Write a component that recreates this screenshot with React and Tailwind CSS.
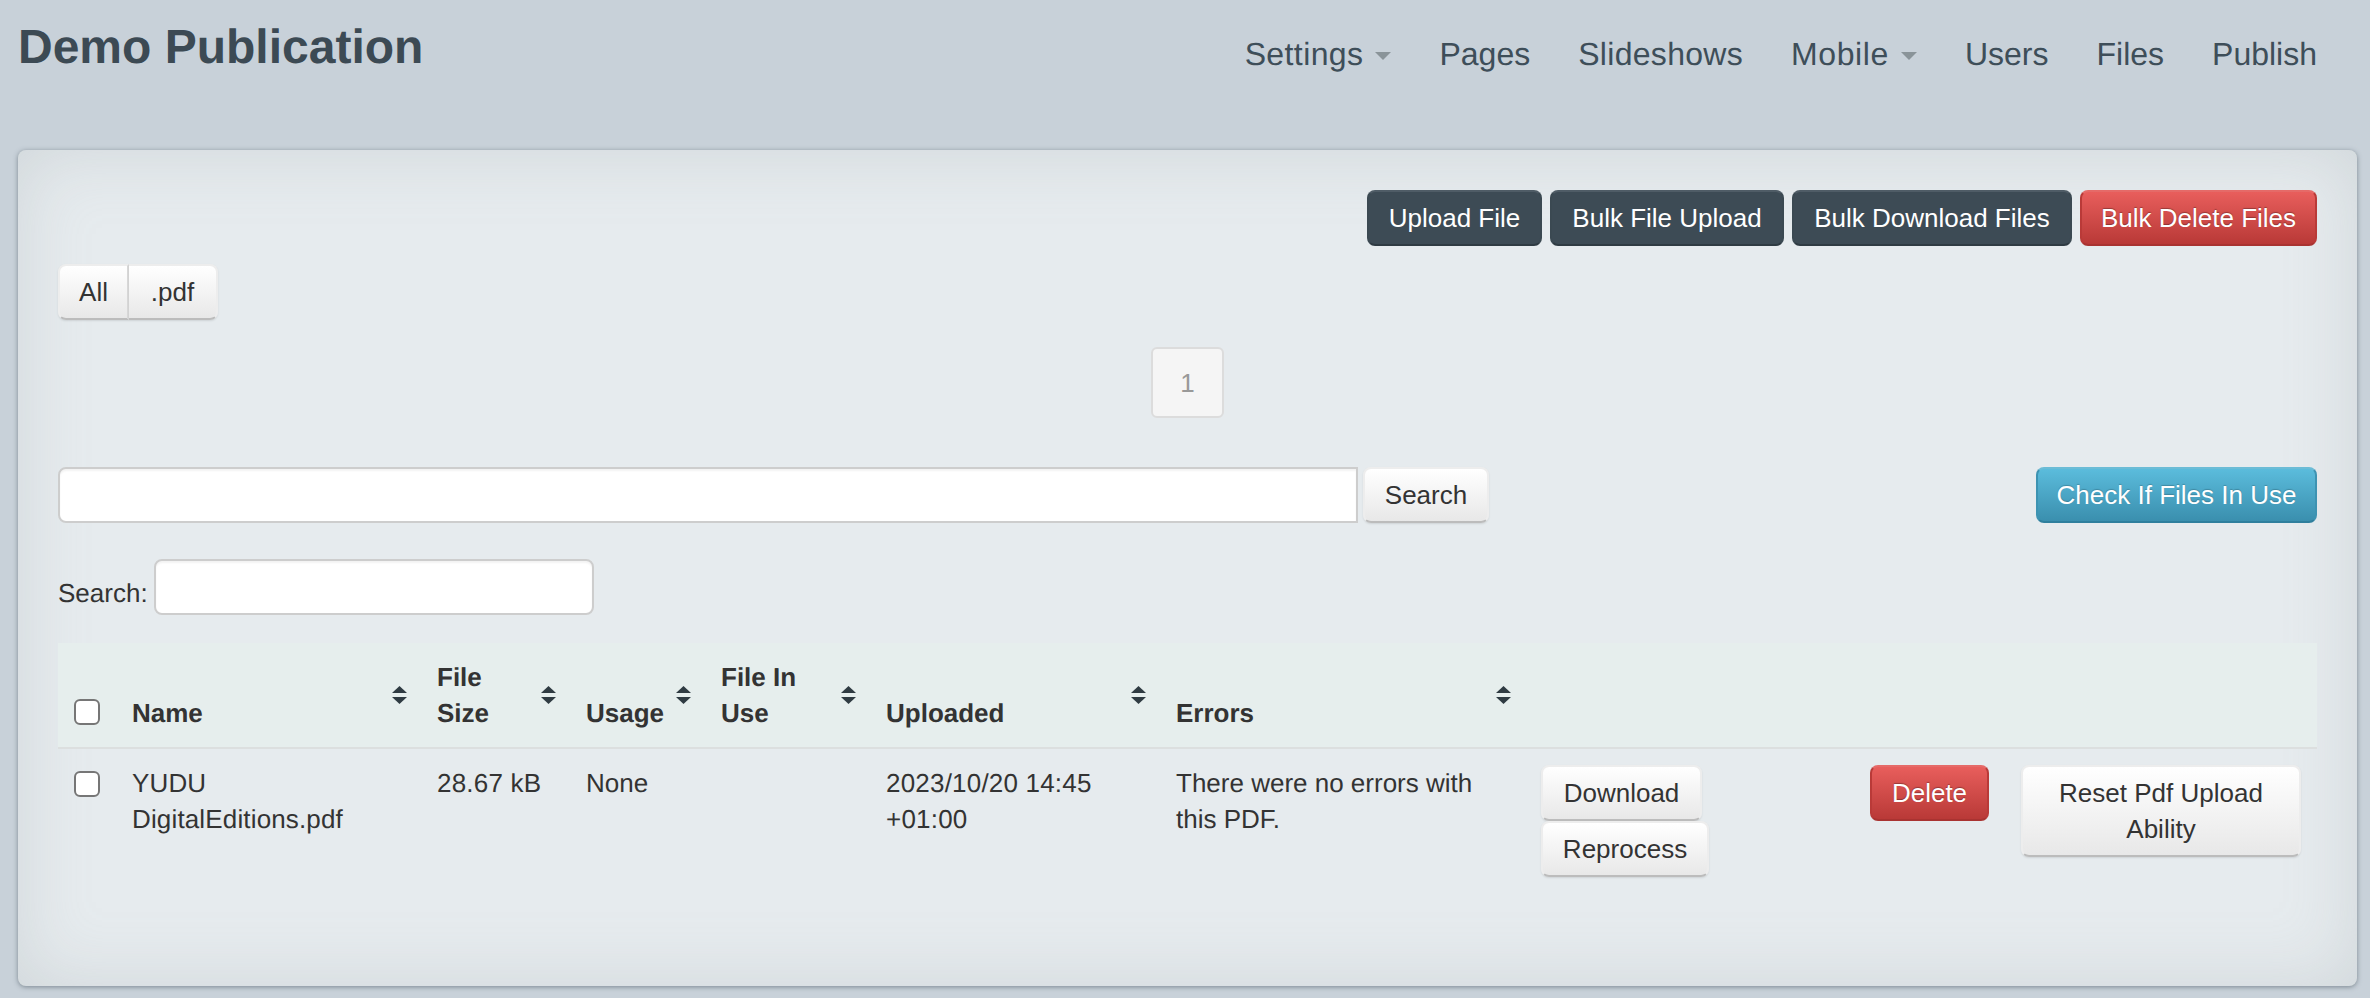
const btn = "inline-block rounded-lg border-2 py-2 text-[26px] leading-9 whitespace-nowrap";
const darkBtn = `${btn} border-[#3b4952] border-t-[#4f5c66] border-b-[#2f3b43] bg-[#3d4b55] text-white`;
const redBtn = `${btn} border-[#b93a38] border-t-[#e56a68] border-b-[#a93331] bg-gradient-to-b from-[#e85e5c] to-[#b93937] text-white [text-shadow:0_-1px_1px_rgba(0,0,0,0.3)]`;
const lightBtn = `${btn} border-[#ededed] border-b-[#bcbcbc] bg-gradient-to-b from-white to-[#e8e8e8] text-[#333] shadow-[0_1px_2px_rgba(0,0,0,0.1)]`;
const blueBtn = `${btn} border-[#3d93b2] border-t-[#6cbcd6] border-b-[#2f7f9d] bg-gradient-to-b from-[#5bbcdc] to-[#3a8fae] text-white [text-shadow:0_-1px_1px_rgba(0,0,0,0.2)]`;
const inputCls = "h-14 rounded-lg border-2 border-[#cdcdcd] bg-white shadow-[inset_0_2px_2px_rgba(0,0,0,0.05)] outline-none";

function Caret() {
  return <span className="ml-3 mt-1 inline-block border-x-8 border-t-8 border-x-transparent border-t-[#8a9499]" />;
}

function SortIcon() {
  return (
    <svg className="absolute right-[14px] top-1/2 -translate-y-1/2" width="15" height="18" viewBox="0 0 15 18">
      <path d="M7.5 0L15 7H0z" fill="#2f3b42" />
      <path d="M7.5 18L15 11H0z" fill="#2f3b42" />
    </svg>
  );
}

function Th({ children, w, sort }) {
  return (
    <th className={`relative ${w} py-4 pl-4 pr-8 text-left align-bottom font-bold`}>
      {children}
      {sort && <SortIcon />}
    </th>
  );
}

function Checkbox() {
  return <input type="checkbox" className="block h-[26px] w-[26px] appearance-none rounded-md border-2 border-[#767676] bg-white" />;
}

export default function App() {
  return (
    <div className="h-[998px] overflow-hidden bg-[#c8d1d9] font-['Liberation_Sans',Arial,sans-serif] text-[26px] leading-9 text-[#333] [text-rendering:geometricPrecision]">
      <header className="flex h-[150px] items-start justify-between pl-[18px] pr-[53px]">
        <h1 className="mt-[21px] text-[48px] font-bold leading-[54px] text-[#3c4a54]">Demo Publication</h1>
        <nav className="mt-[35px] flex items-center gap-12 text-[32px] leading-[38px] text-[#3e4e59]">
          <a className="flex items-center tracking-[0.4px]">Settings<Caret /></a>
          <a>Pages</a>
          <a className="tracking-[0.3px]">Slideshows</a>
          <a className="flex items-center tracking-[0.6px]">Mobile<Caret /></a>
          <a>Users</a>
          <a>Files</a>
          <a>Publish</a>
        </nav>
      </header>

      <main className="mr-[13px] ml-[18px] h-[836px] rounded-lg bg-[#e6ebee] p-10 shadow-[inset_0_0_70px_rgba(150,160,165,0.28),0_1px_5px_rgba(60,75,85,0.55)]">
        <div className="flex justify-end gap-2">
          <button className={`${darkBtn} w-[175px]`}>Upload File</button>
          <button className={`${darkBtn} w-[234px]`}>Bulk File Upload</button>
          <button className={`${darkBtn} w-[280px]`}>Bulk Download Files</button>
          <button className={`${redBtn} w-[237px]`}>Bulk Delete Files</button>
        </div>

        <div className="mt-[18px] flex">
          <button className={`${lightBtn} w-[71px] rounded-r-none border-r-[#d8d8d8]`}>All</button>
          <button className={`${lightBtn} w-[89px] rounded-l-none border-l-0`}>.pdf</button>
        </div>

        <div className="mt-[27px] flex justify-center">
          <span className="flex h-[71px] w-[73px] items-center justify-center rounded-md border-2 border-[#dcdcdc] bg-[#f5f5f5] text-[#999]">1</span>
        </div>

        <div className="mt-[49px] flex items-center">
          <input className={`${inputCls} w-[1300px] rounded-r-none`} />
          <button className={`${lightBtn} ml-[5px] w-[126px]`}>Search</button>
          <button className={`${blueBtn} ml-auto w-[281px]`}>Check If Files In Use</button>
        </div>

        <div className="mt-9 flex items-end">
          <label className="pb-1">Search:</label>
          <input className={`${inputCls} ml-1.5 w-[440px]`} />
        </div>

        <table className="mt-7 w-full table-fixed border-collapse">
          <thead>
            <tr className="h-[104px] border-b-2 border-[#dcdfdf] bg-[#e6eeed]">
              <th className="w-[58px] px-4 pb-[22px] align-bottom"><Checkbox /></th>
              <Th w="w-[305px]" sort>Name</Th>
              <Th w="w-[149px]" sort>File Size</Th>
              <Th w="w-[135px]" sort>Usage</Th>
              <Th w="w-[165px]" sort>File In Use</Th>
              <Th w="w-[290px]" sort>Uploaded</Th>
              <Th w="w-[365px]" sort>Errors</Th>
              <th className="w-[329px]" />
              <th className="w-[151px]" />
              <th />
            </tr>
          </thead>
          <tbody>
            <tr className="align-top">
              <td className="px-4 pt-[22px]"><Checkbox /></td>
              <td className="px-4 pt-4 tracking-[0.15px]">YUDU DigitalEditions.pdf</td>
              <td className="px-4 pt-4 tracking-[0.2px]">28.67 kB</td>
              <td className="px-4 pt-4">None</td>
              <td className="px-4 pt-4" />
              <td className="px-4 pt-4 tracking-[0.2px]">2023/10/20 14:45 +01:00</td>
              <td className="px-4 pt-4">There were no errors with this PDF.</td>
              <td className="px-4 pt-4">
                <div className="flex flex-col items-start">
                  <button className={`${lightBtn} w-[161px]`}>Download</button>
                  <button className={`${lightBtn} w-[168px]`}>Reprocess</button>
                </div>
              </td>
              <td className="px-4 pt-4"><button className={`${redBtn} w-[119px]`}>Delete</button></td>
              <td className="px-4 pt-4">
                <button className={`${lightBtn} w-[280px] !whitespace-normal px-5`}>Reset Pdf Upload Ability</button>
              </td>
            </tr>
          </tbody>
        </table>
      </main>
    </div>
  );
}
